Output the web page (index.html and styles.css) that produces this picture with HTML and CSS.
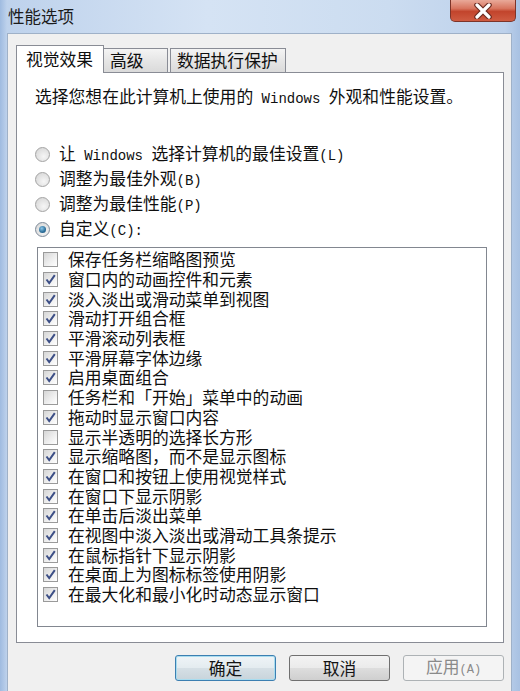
FILE: index.html
```html
<!DOCTYPE html>
<html lang="zh-CN">
<head>
    <meta charset="UTF-8">
    <title>性能选项</title>
    <link rel="stylesheet" href="styles.css">
</head>
<body>
    <div class="window">
        <div class="titlebar">
            <span class="title">性能选项</span>
            <div class="close">
                <svg width="26" height="16" viewBox="0 0 26 16">
                    <path d="M7 2 L19 14 M19 2 L7 14" stroke="#6a2a20" stroke-width="5.5" stroke-linecap="round"/>
                    <path d="M7 2 L19 14 M19 2 L7 14" stroke="#ffffff" stroke-width="3.2" stroke-linecap="round"/>
                </svg>
            </div>
        </div>

        <div class="client">
            <div class="tabctl">
                <div class="tabrow">
                    <div class="tab active">视觉效果</div>
                    <div class="tab adv">高级</div>
                    <div class="tab dep">数据执行保护</div>
                </div>

                <div class="panel">
                    <p class="intro">选择您想在此计算机上使用的<span class="latin"> Windows </span>外观和性能设置。</p>

                    <div class="radios">
                        <div class="radio-row"><span class="radio"></span><span>让<span class="latin"> Windows </span>选择计算机的最佳设置<span class="latin">(L)</span></span></div>
                        <div class="radio-row"><span class="radio"></span><span>调整为最佳外观<span class="latin">(B)</span></span></div>
                        <div class="radio-row"><span class="radio"></span><span>调整为最佳性能<span class="latin">(P)</span></span></div>
                        <div class="radio-row"><span class="radio on"><span class="dot"></span></span><span>自定义<span class="latin">(C):</span></span></div>
                    </div>

                    <div class="listbox" id="list"></div>
                </div>
            </div>

            <div class="buttons">
                <button class="btn default">确定</button>
                <button class="btn">取消</button>
                <button class="btn disabled">应用<span class="latin small">(A)</span></button>
            </div>
        </div>
    </div>

    <script>
        // effects list: [label, checked]
        const effects = [
            ["保存任务栏缩略图预览", false],
            ["窗口内的动画控件和元素", true],
            ["淡入淡出或滑动菜单到视图", true],
            ["滑动打开组合框", true],
            ["平滑滚动列表框", true],
            ["平滑屏幕字体边缘", true],
            ["启用桌面组合", true],
            ["任务栏和「开始」菜单中的动画", false],
            ["拖动时显示窗口内容", true],
            ["显示半透明的选择长方形", false],
            ["显示缩略图，而不是显示图标", true],
            ["在窗口和按钮上使用视觉样式", true],
            ["在窗口下显示阴影", true],
            ["在单击后淡出菜单", true],
            ["在视图中淡入淡出或滑动工具条提示", true],
            ["在鼠标指针下显示阴影", true],
            ["在桌面上为图标标签使用阴影", true],
            ["在最大化和最小化时动态显示窗口", true]
        ];

        const check = '<svg width="13" height="13" viewBox="0 0 13 13"><path d="M2.5 6.5 L5.2 10 L10.8 2.2" stroke="#3d4f86" stroke-width="2" fill="none"/></svg>';

        const list = document.getElementById("list");
        effects.forEach(([label, on]) => {
            const row = document.createElement("div");
            row.className = "item";
            row.innerHTML = `<span class="cb">${on ? check : ""}</span><span>${label}</span>`;
            list.appendChild(row);
        });
    </script>
</body>
</html>
```

FILE: styles.css
```css
/* Reset */
* {
    box-sizing: border-box;
}

body {
    margin: 0;
    font-family: "Noto Sans CJK SC", sans-serif;
    color: #0f0f0f;
}

/* Aero window frame */
.window {
    width: 520px;
    height: 691px;
    overflow: hidden;
    display: flex;
    flex-direction: column;
    padding: 0 8px 0 7px;
    background: linear-gradient(90deg, #9fbbe0 0, #bed2ec 7px, #d5e3f4 40%, #cbdcf0 75%, #bdd1eb 505px, #a8c1e2 100%);
}

.titlebar {
    height: 33px;
    display: flex;
    justify-content: space-between;
    align-items: flex-start;
}

.title {
    margin-left: 1px;
    font-size: 16.5px;
    line-height: 32px;
    color: #1b1b1b;
}

.close {
    width: 66px;
    height: 22px;
    margin-right: -4px;
    display: flex;
    align-items: center;
    justify-content: center;
    border: 1px solid #7d3429;
    border-top: none;
    border-radius: 0 0 5px 5px;
    background: linear-gradient(#e9a999 0, #d8755f 40%, #c2442c 55%, #cf5c42 100%);
}

/* Client area */
.client {
    flex: 1;
    background: #f0f0f0;
    border: 1px solid #9fb1c8;
    border-bottom: none;
    padding: 11px 7px 0 8px;
}

.tabctl {
    display: flex;
    flex-direction: column;
}

.tabrow {
    height: 27px;
    display: flex;
    align-items: flex-end;
}

.tab {
    height: 24px;
    border: 1px solid #898c95;
    border-bottom: none;
    padding: 0 6px;
    font-size: 16.8px;
    line-height: 22px;
    background: linear-gradient(#f4f4f4, #e6e6e6 50%, #dadada);
}

.tab.active {
    width: 88px;
    height: 28px;
    padding: 0 9px;
    line-height: 27px;
    margin-bottom: -1px;
    background: #ffffff;
    position: relative;
    z-index: 1;
}

.tab.adv {
    width: 65px;
    margin-left: -1px;
}

.tab.dep {
    width: 116px;
    margin-left: 2px;
}

.panel {
    height: 571px;
    background: #ffffff;
    border: 1px solid #898c95;
    padding: 13px 0 0 18px;
}

.intro {
    margin: 0;
    font-size: 16.8px;
    line-height: 20px;
}

.latin {
    font-family: "Liberation Mono", monospace;
    font-size: 14px;
}

.small {
    font-size: 12px;
}

/* Radio options */
.radios {
    margin-top: 33px;
    display: flex;
    flex-direction: column;
}

.radio-row {
    height: 25px;
    display: flex;
    align-items: center;
    gap: 9px;
    font-size: 16.8px;
    line-height: 20px;
}

.radio {
    width: 15px;
    height: 15px;
    border-radius: 50%;
    border: 1px solid #a3a3a3;
    background: radial-gradient(circle at 60% 65%, #f6f6f6, #d2d2d2);
    display: flex;
    align-items: center;
    justify-content: center;
}

.radio.on {
    border-color: #7d8a99;
}

.dot {
    width: 7px;
    height: 7px;
    border-radius: 50%;
    background: radial-gradient(circle at 40% 35%, #8cc6e8, #2a6d98 60%, #174d73);
}

/* Effects list */
.listbox {
    width: 450px;
    height: 380px;
    margin: 5px 0 0 2px;
    border: 1px solid #828790;
    padding: 2px 0 0 5px;
}

.item {
    height: 19.7px;
    display: flex;
    align-items: center;
    gap: 10px;
    font-size: 16.8px;
    line-height: 19px;
}

.cb {
    width: 15px;
    height: 15px;
    flex-shrink: 0;
    border: 1px solid #9a9a9a;
    background: linear-gradient(135deg, #d6d6d6, #f4f4f4 70%, #ffffff);
    display: flex;
    align-items: center;
    justify-content: center;
}

/* Dialog buttons */
.buttons {
    display: flex;
    justify-content: flex-end;
    gap: 13px;
    margin-top: 12px;
}

.btn {
    width: 101px;
    height: 26px;
    padding: 0;
    font-family: inherit;
    font-size: 16.8px;
    line-height: 20px;
    color: #141414;
    border: 1px solid #707070;
    border-radius: 3px;
    background: linear-gradient(#f3f3f3 0, #ebebeb 48%, #dddddd 52%, #cfcfcf 100%);
}

.btn.default {
    border-color: #3c7fb1;
    box-shadow: inset 0 0 0 1px #a8dcef;
    background: linear-gradient(#eff4f7 0, #e4ecf0 48%, #d5dfe5 52%, #c8d4db 100%);
}

.btn.disabled {
    color: #8a8a8a;
    border-color: #adb2b5;
    background: #f4f4f4;
}
```
